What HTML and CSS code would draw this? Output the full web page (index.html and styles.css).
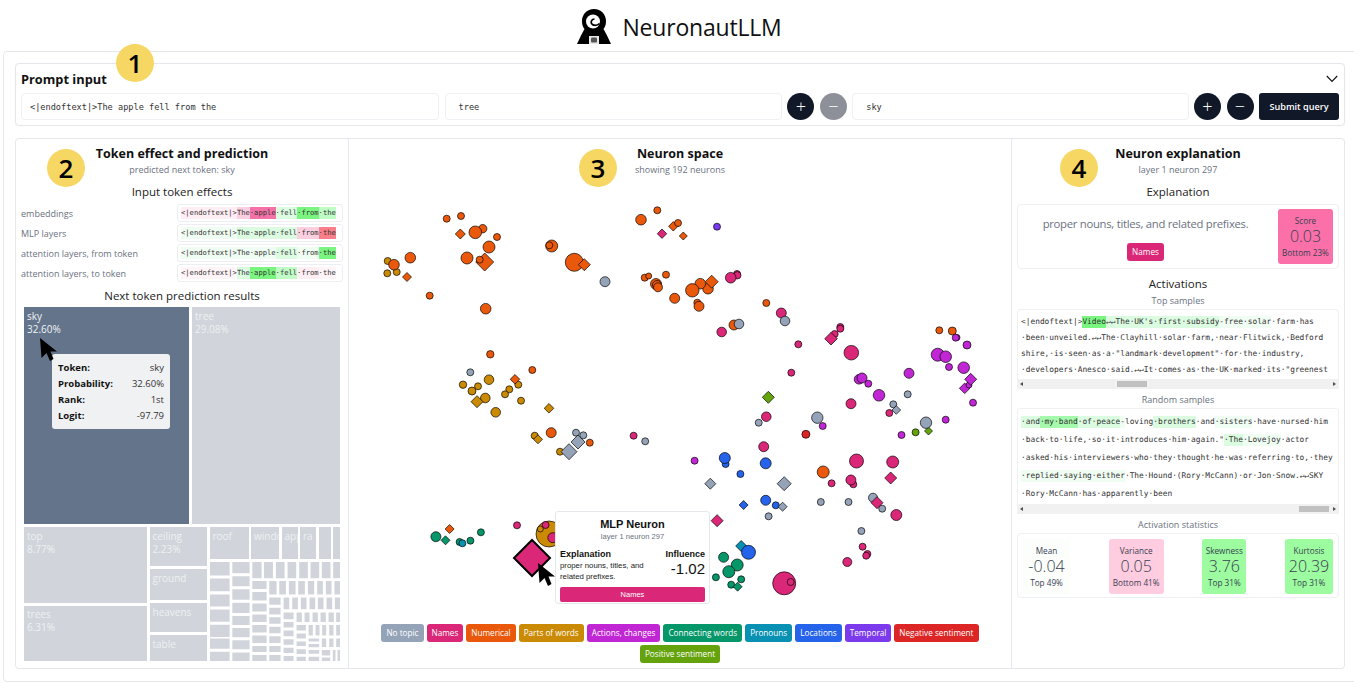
FILE: index.html
```html
<!DOCTYPE html>
<html lang="en">
<head>
<meta charset="utf-8">
<title>NeuronautLLM</title>
<link rel="stylesheet" href="styles.css">
</head>
<body>
<header class="top">
  <svg class="logo" viewBox="0 0 34 35" aria-hidden="true">
    <path fill="#000" d="M17 0C10 0 5 5.500 5 12C5 16 6 18 7.500 20L4 26.500L0 35H34L30 26.500L26.500 20C28 18 29 16 29 12C29 5.500 24 0 17 0z"/>
    <circle cx="16" cy="12.500" r="7" fill="#fff"/>
    <path fill="none" stroke="#000" stroke-width="1.700" d="M22.500 14.500c-2.500 2.500-6.500 2.500-8 0-1-2 .5-4.500 3-4.500"/>
    <rect x="12" y="27" width="10" height="8" fill="#e8e8e8"/>
    <rect x="14" y="28.500" width="6" height="5" rx="1" fill="#555"/>
  </svg>
  <h1 class="brand">NeuronautLLM</h1>
</header>

<main class="shell">
  <section class="prompt">
    <span class="badge badge-one">1</span>
    <div class="prompt-head">
      <h2 class="prompt-title">Prompt input</h2>
      <svg class="chevron" viewBox="0 0 12 8" aria-hidden="true"><path d="M.8 1l5.200 5.500L11.200 1"/></svg>
    </div>
    <div class="prompt-row">
      <div class="field field-main mono">&lt;|endoftext|&gt;The apple fell from the</div>
      <div class="field field-tree mono"><span>tree</span></div>
      <button class="round">+</button>
      <button class="round round-off">&minus;</button>
      <div class="field field-sky mono"><span>sky</span></div>
      <button class="round">+</button>
      <button class="round">&minus;</button>
      <button class="submit">Submit query</button>
    </div>
  </section>

  <section class="panels">
    <div class="col col-left">
      <span class="badge badge-two">2</span>
      <h2 class="col-title">Token effect and prediction</h2>
      <p class="col-sub">predicted next token: sky</p>
      <h3 class="sec">Input token effects</h3>
      <div class="effects">
        <div class="effect"><span class="effect-label">embeddings</span><div class="strip"><span class="p1">&lt;|endoftext|&gt;</span><span class="p2">The</span><span class="p4">·apple</span><span class="g1">·fell</span><span class="g4">·from</span><span class="g2">·the</span></div></div>
        <div class="effect"><span class="effect-label">MLP layers</span><div class="strip"><span class="g0">&lt;|endoftext|&gt;</span><span class="g1">The·apple·fell</span><span class="p2">·from</span><span class="r4">·the</span></div></div>
        <div class="effect"><span class="effect-label">attention layers, from token</span><div class="strip"><span class="g0">&lt;|endoftext|&gt;The·apple</span><span class="g1">·fell</span><span class="g0">·from</span><span class="g4">·the</span></div></div>
        <div class="effect"><span class="effect-label">attention layers, to token</span><div class="strip"><span class="p0">&lt;|endoftext|&gt;</span><span class="g1">The</span><span class="g4">·apple</span><span class="g2">·fell</span><span class="p1">·from</span><span class="p0">·the</span></div></div>
      </div>
      <h3 class="sec sec-next">Next token prediction results</h3>
      <div class="treemap">
        <div class="tm-row tm-big">
          <div class="cell cell-sky">sky<br>32.60%</div>
          <div class="cell cell-tree">tree<br>29.08%</div>
        </div>
        <div class="tm-row tm-small">
          <div class="tm-col tm-a">
            <div class="cell cell-top">top<br>8.77%</div>
            <div class="cell cell-trees">trees<br>6.31%</div>
          </div>
          <div class="tm-col tm-b">
            <div class="cell cell-ceil">ceiling<br>2.23%</div>
            <div class="cell cell-ground">ground</div>
            <div class="cell cell-heavens">heavens</div>
            <div class="cell cell-table">table</div>
          </div>
          <div class="tm-col tm-c">
            <div class="tm-strip">
              <div class="cell cell-roof">roof</div>
              <div class="cell cell-win">windo</div>
              <div class="cell cell-app">app</div>
              <div class="cell cell-ra">ra</div>
              <div class="cell cell-x1"></div>
              <div class="cell cell-x2"></div>
            </div>
            <svg class="tm-rest" viewBox="626 785 392 295" preserveAspectRatio="none" aria-hidden="true">
              <path fill="#d1d5db" d="M626 785H685V825H626zM626 834H685V872H626zM626 881H685V917H626zM626 926H685V962H626zM626 971H685V1007H626zM626 1012H685V1042H626zM626 1051H685V1080H626zM693 785H745V818H693zM693 827H745V857H693zM693 866H745V897H693zM693 906H745V936H693zM693 945H745V972H693zM693 981H745V1008H693zM693 1017H745V1044H693zM693 1053H745V1080H693zM753 785H781V833H753zM788 785H815V833H788zM824 785H850V833H824zM859 785H885V833H859zM894 785H920V833H894zM928 785H954V833H928zM962 785H988V833H962zM996 785H1018V833H996zM753 841H796V865H753zM753 874H796V899H753zM753 908H796V932H753zM753 941H796V963H753zM753 972H796V994H753zM753 1003H796V1025H753zM753 1034H796V1052H753zM753 1061H796V1080H753zM804 841H826V881H804zM834 841H854V881H834zM863 841H883V881H863zM891 841H911V881H891zM920 841H939V881H920zM948 841H965V881H948zM974 841H991V881H974zM1000 841H1018V881H1000zM804 890H838V912H804zM804 921H838V941H804zM804 949H838V968H804zM804 977H838V996H804zM804 1005H838V1025H804zM804 1034H838V1052H804zM804 1061H838V1080H804zM847 890H864V925H847zM873 890H890V925H873zM899 890H916V925H899zM925 890H942V925H925zM950 890H967V925H950zM976 890H993V925H976zM1001 890H1018V925H1001zM847 935H877V955H847zM847 963H877V979H847zM847 988H877V1005H847zM847 1014H877V1030H847zM847 1039H877V1055H847zM847 1064H877V1080H847zM886 935H902V963H886zM910 935H925V963H910zM934 935H950V963H934zM958 935H974V963H958zM982 935H998V963H982zM1005 935H1018V963H1005zM886 972H914V988H886zM886 997H914V1012H886zM886 1021H914V1034H886zM886 1044H914V1058H886zM886 1066H914V1080H886zM922 972H935V1003H922zM943 972H955V1003H943zM963 972H975V1003H963zM984 972H997V1003H984zM1005 972H1018V1003H1005zM922 1012H954V1021H922zM922 1028H954V1038H922zM922 1046H954V1057H922zM922 1066H954V1080H922zM962 1012H975V1037H962zM984 1012H997V1037H984zM1005 1012H1018V1037H1005zM962 1046H987V1062H962zM962 1068H987V1080H962zM995 1046H1003V1080H995zM1009 1046H1018V1080H1009z"/>
            </svg>
          </div>
        </div>
        <div class="tm-tip">
          <div class="tip-row"><b>Token:</b><span>sky</span></div>
          <div class="tip-row"><b>Probability:</b><span>32.60%</span></div>
          <div class="tip-row"><b>Rank:</b><span>1st</span></div>
          <div class="tip-row"><b>Logit:</b><span>-97.79</span></div>
        </div>
        <svg class="cursor cursor-tm" viewBox="0 0 17 23" aria-hidden="true"><path d="M0 0L17 13.500 10.500 13.500 13.500 21 10 23 6.500 15 1.500 20z"/></svg>
      </div>
    </div>

    <div class="col col-mid">
      <span class="badge badge-three">3</span>
      <h2 class="col-title">Neuron space</h2>
      <p class="col-sub">showing 192 neurons</p>
      <svg class="scatter" viewBox="349 180 663 440" aria-hidden="true">
        <g class="t-parts">
          <circle cx="387.700" cy="261" r="3.500"/><circle cx="387.300" cy="273.300" r="3.500"/><circle cx="396.700" cy="272" r="3.500"/>
          <circle cx="463" cy="384.700" r="3.700"/><circle cx="489" cy="379.700" r="4.800"/><circle cx="478" cy="386.300" r="3.500"/><circle cx="472" cy="391" r="4"/><circle cx="485.300" cy="398" r="4.800"/><circle cx="495.700" cy="412.300" r="4.800"/><circle cx="509.300" cy="389.300" r="3.500"/><circle cx="505" cy="394.300" r="3.500"/><circle cx="518.300" cy="384.700" r="3.500"/><circle cx="521" cy="400.700" r="3.500"/><circle cx="534.700" cy="435.700" r="3.500"/><circle cx="560" cy="451.700" r="3.500"/>
          <path d="M477 401.700m0-6l6 6-6 6-6-6z"/><path d="M549 408.300m0-4.800l4.800 4.800-4.800 4.800-4.800-4.800z"/><path d="M538 439.300m0-4.500l4.500 4.500-4.500 4.500-4.500-4.500z"/>
          <circle cx="549" cy="534" r="13"/><circle cx="540.300" cy="529" r="3"/>
        </g>
        <g class="t-num">
          <circle cx="446.700" cy="218.700" r="3.500"/><circle cx="461" cy="216" r="3.500"/><circle cx="482.700" cy="228.700" r="4.200"/><circle cx="475.300" cy="232.300" r="6.300"/><circle cx="497" cy="237" r="3.500"/><circle cx="489" cy="247" r="6"/><circle cx="467" cy="258" r="6"/>
          <path d="M460.300 234m0-5l5 5-5 5-5-5z"/><path d="M484.700 262m0-9l9 9-9 9-9-9z"/><circle cx="479.700" cy="259.700" r="3.500"/>
          <circle cx="410.300" cy="257.700" r="5.300"/><circle cx="394" cy="264.700" r="5.300"/><path d="M407 277m0-4.500l4.500 4.500-4.500 4.500-4.500-4.500z"/><circle cx="429.700" cy="295.700" r="3.500"/><circle cx="485.700" cy="308.700" r="5.300"/>
          <circle cx="551.700" cy="246" r="6"/><circle cx="549.300" cy="245.300" r="3.500"/><circle cx="574.300" cy="262.300" r="9"/><path d="M584.300 264.700m0-6l6 6-6 6-6-6z"/>
          <circle cx="641" cy="219.700" r="5.300"/><circle cx="657.300" cy="210.300" r="3.500"/><path d="M673.300 226.300m0-4.700l4.700 4.700-4.700 4.700-4.700-4.700z"/><circle cx="678" cy="223" r="3.500"/><path d="M683.300 236m0-4l4 4-4 4-4-4z"/>
          <circle cx="644.700" cy="277.700" r="3.500"/><circle cx="648.700" cy="276" r="3"/><circle cx="666" cy="274.700" r="3.500"/><circle cx="656" cy="284" r="5.500"/><circle cx="657" cy="285" r="4.500"/><circle cx="658" cy="287.300" r="4.500"/><circle cx="674.700" cy="298.300" r="5"/>
          <circle cx="708" cy="288.700" r="5.300"/><path d="M711.700 281.700m0-6.500l6.500 6.500-6.500 6.500-6.500-6.500z"/><circle cx="700.300" cy="283.700" r="5.300"/><circle cx="692.300" cy="290.300" r="6.700"/><circle cx="697.300" cy="302.700" r="3.500"/><circle cx="699" cy="306.300" r="5"/>
          <circle cx="766.300" cy="303" r="3.500"/><circle cx="734" cy="325" r="5"/><circle cx="939.300" cy="330.300" r="3.500"/><circle cx="952.300" cy="331" r="4"/>
          <circle cx="490.300" cy="354.300" r="3.700"/><circle cx="532.300" cy="370" r="3.500"/><path d="M515 379.300m0-4.800l4.800 4.800-4.800 4.800-4.800-4.800z"/><circle cx="551.200" cy="432.700" r="5"/><circle cx="589.800" cy="442.700" r="3.500"/><circle cx="823.200" cy="472" r="6"/><path d="M449.600 529m0-4.500l4.500 4.500-4.500 4.500-4.500-4.500z"/>
        </g>
        <g class="t-act">
          <circle cx="859" cy="379.300" r="4.800"/><circle cx="862" cy="378" r="5"/><circle cx="868.300" cy="383.700" r="3.500"/><circle cx="909" cy="373.300" r="5"/><circle cx="879" cy="395.300" r="5.800"/>
          <circle cx="822.700" cy="426" r="3.500"/><circle cx="945.700" cy="419.700" r="3.500"/><circle cx="957" cy="337.500" r="3"/><circle cx="955.700" cy="337.700" r="3.500"/><circle cx="967" cy="345" r="4"/><circle cx="937.700" cy="354.700" r="6.500"/><circle cx="945.700" cy="356.700" r="5.800"/><circle cx="949" cy="367" r="3.500"/><circle cx="963.700" cy="367.700" r="5.800"/>
          <path d="M964.700 388.300m0-5.300l5.300 5.300-5.300 5.300-5.300-5.300z"/><circle cx="969" cy="385" r="3"/><path d="M970.700 379.300m0-6l6 6-6 6-6-6z"/><circle cx="973" cy="402.700" r="3.500"/><circle cx="901.500" cy="435" r="3.500"/><circle cx="694.600" cy="460.700" r="3.500"/>
        </g>
        <g class="t-names">
          <path d="M662 233.700m0-4.700l4.700 4.700-4.700 4.700-4.700-4.700z"/><circle cx="737" cy="274" r="3.500"/><circle cx="737.300" cy="275.300" r="3.700"/><circle cx="730.700" cy="277.700" r="5.300"/><circle cx="781.300" cy="313" r="5"/><circle cx="721.700" cy="332" r="4.800"/><circle cx="798.300" cy="344.300" r="3.500"/>
          <circle cx="840.300" cy="327" r="3.500"/><circle cx="840.300" cy="328.700" r="3.500"/><circle cx="834.700" cy="334" r="3.500"/><path d="M831 338.700m0-6.300l6.300 6.300-6.300 6.300-6.300-6.300z"/><circle cx="851.300" cy="352.700" r="7.300"/><circle cx="791.300" cy="372.700" r="3.500"/><circle cx="766.300" cy="416.700" r="4.800"/><circle cx="851" cy="403.700" r="5"/><circle cx="889.300" cy="413" r="3.500"/>
          <circle cx="633.600" cy="435.700" r="3.500"/><circle cx="763.700" cy="446.700" r="5"/><circle cx="856.500" cy="461" r="7"/><circle cx="892.700" cy="462" r="6"/><circle cx="831.600" cy="483.300" r="3.500"/><circle cx="853.300" cy="484.300" r="3.500"/><circle cx="850.900" cy="480" r="5"/><path d="M890.700 478m0-6l6 6-6 6-6-6z"/><circle cx="896.300" cy="515" r="5.500"/><path d="M717.100 520.700m0-6l6 6-6 6-6-6z"/>
          <circle cx="862.600" cy="546.700" r="3.500"/><circle cx="867.400" cy="554" r="3.500"/><circle cx="866.200" cy="555.700" r="3.500"/><circle cx="847.300" cy="562" r="4.500"/><circle cx="784.200" cy="583.300" r="11.500"/><circle cx="790.700" cy="582" r="3.500"/><circle cx="517" cy="525.300" r="3.500"/><circle cx="545.600" cy="525" r="3.500"/><circle cx="552.800" cy="537.700" r="5"/>
        </g>
        <g class="t-conn">
          <circle cx="723.600" cy="557.300" r="5"/><circle cx="737.200" cy="565" r="6"/><circle cx="728.800" cy="571.700" r="6"/><circle cx="715.900" cy="577.300" r="3.500"/><circle cx="741.200" cy="579.300" r="3.500"/><circle cx="731.200" cy="584.700" r="3.500"/><path d="M737.600 586.700m0-4.500l4.500 4.500-4.500 4.500-4.500-4.500z"/>
          <circle cx="435.900" cy="536.700" r="5"/><path d="M445.500 540.300m0-4.500l4.500 4.500-4.500 4.500-4.500-4.500z"/><circle cx="459.600" cy="542" r="3.500"/><circle cx="470.400" cy="540.700" r="3.500"/><circle cx="480.900" cy="532.300" r="3.500"/>
        </g>
        <g class="t-pron"><circle cx="462.400" cy="543.300" r="3.500"/><path d="M741.200 546m0-5.500l5.500 5.500-5.500 5.500-5.500-5.500z"/></g>
        <g class="t-loc">
          <circle cx="725.600" cy="464" r="3.500"/><circle cx="724.800" cy="458" r="5.500"/><circle cx="765.700" cy="463.300" r="5.500"/><circle cx="740.400" cy="474" r="3.500"/><path d="M743.600 505m0-4.500l4.500 4.500-4.500 4.500-4.500-4.500z"/><circle cx="765.700" cy="500.300" r="5"/><circle cx="775.800" cy="505.300" r="3.500"/><circle cx="748.500" cy="552.300" r="7"/>
        </g>
        <g class="t-temp"><circle cx="717" cy="226.700" r="3.500"/></g>
        <g class="t-neg"><circle cx="805.900" cy="434.300" r="4"/></g>
        <g class="t-pos"><path d="M768.300 397.300m0-6l6 6-6 6-6-6z"/><circle cx="915.600" cy="432.300" r="3.500"/><path d="M928.500 431m0-4l4 4-4 4-4-4z"/></g>
        <g class="t-none">
          <circle cx="605" cy="281.700" r="5"/><circle cx="739" cy="324" r="4.800"/><circle cx="785" cy="321" r="4.800"/><circle cx="758.700" cy="422.700" r="3.500"/><circle cx="817.300" cy="417.700" r="5.700"/><circle cx="907.700" cy="394.300" r="3.500"/><circle cx="893.300" cy="404.300" r="3.500"/><path d="M896.300 410m0-4.300l4.300 4.300-4.300 4.300-4.300-4.300z"/><circle cx="926" cy="422.700" r="5.700"/>
          <circle cx="470.300" cy="372.300" r="3.500"/><circle cx="576" cy="432.700" r="3.500"/><circle cx="583.300" cy="435.300" r="3.500"/><path d="M578 442m0-7l7 7-7 7-7-7z"/><path d="M569 451.700m0-8l8 8-8 8-8-8z"/><circle cx="645.200" cy="441.300" r="3.500"/>
          <path d="M710.300 483.700m0-5.500l5.500 5.500-5.500 5.500-5.500-5.500z"/><path d="M784.200 483.700m0-7l7 7-7 7-7-7z"/><path d="M782.600 506.700m0-4.500l4.500 4.500-4.500 4.500-4.500-4.500z"/><circle cx="820.800" cy="502" r="3.500"/><circle cx="848.500" cy="502" r="3.500"/><circle cx="873" cy="497.700" r="4.500"/><circle cx="882.200" cy="508.700" r="3.500"/><circle cx="768.600" cy="516.300" r="3.500"/><circle cx="861.400" cy="531" r="3.500"/>
        </g>
        <g class="t-names"><path d="M877 502.700m0-6l6 6-6 6-6-6z"/></g>
        <path class="selected" d="M532 558m0-18l18 18-18 18-18-18z"/>
      </svg>
      <div class="neuron-tip">
        <h4 class="nt-title">MLP Neuron</h4>
        <p class="nt-sub">layer 1 neuron 297</p>
        <div class="nt-body">
          <div class="nt-exp"><b>Explanation</b><p>proper nouns, titles, and related prefixes.</p></div>
          <div class="nt-inf"><b>Influence</b><span class="nt-val">-1.02</span></div>
        </div>
        <div class="nt-chip">Names</div>
      </div>
      <svg class="cursor cursor-sc" viewBox="0 0 17 23" aria-hidden="true"><path d="M0 0L17 13.500 10.500 13.500 13.500 21 10 23 6.500 15 1.500 20z"/></svg>
      <div class="chips">
        <span class="chip c-none">No topic</span>
        <span class="chip c-names">Names</span>
        <span class="chip c-num">Numerical</span>
        <span class="chip c-parts">Parts of words</span>
        <span class="chip c-act">Actions, changes</span>
        <span class="chip c-conn">Connecting words</span>
        <span class="chip c-pron">Pronouns</span>
        <span class="chip c-loc">Locations</span>
        <span class="chip c-temp">Temporal</span>
        <span class="chip c-neg">Negative sentiment</span>
        <span class="chip c-pos">Positive sentiment</span>
      </div>
    </div>

    <div class="col col-right">
      <span class="badge badge-four">4</span>
      <h2 class="col-title">Neuron explanation</h2>
      <p class="col-sub">layer 1 neuron 297</p>
      <h3 class="sec">Explanation</h3>
      <div class="card explain">
        <div class="explain-text">
          <p class="explain-line">proper nouns, titles, and related prefixes.</p>
          <span class="chip c-names">Names</span>
        </div>
        <div class="stat stat-score"><span class="stat-k">Score</span><span class="stat-v">0.03</span><span class="stat-k">Bottom 23%</span></div>
      </div>
      <h3 class="sec sec-act">Activations</h3>
      <p class="col-sub sub-top">Top samples</p>
      <div class="sample sample-top mono">
        <div><span>&lt;|endoftext|&gt;</span><span class="g4">Video</span><span class="g1">↵↵The·UK's·first·subsidy</span><span class="g0">-free·solar</span>·farm·has</div>
        <div>·been·unveiled.↵↵The·Clayhill·solar·farm,·near·Flitwick,·Bedford</div>
        <div>shire,·is·seen·as·a·"landmark·development"·for·the·industry,</div>
        <div>·developers·Anesco·said.↵↵It·comes·as·the·UK·marked·its·"greenest</div>
      </div>
      <div class="scrollbar"><i class="arrow-l"></i><b class="thumb thumb-top"></b><i class="arrow-r"></i></div>
      <p class="col-sub sub-random">Random samples</p>
      <div class="sample sample-rand mono">
        <div><span class="g1">·and</span><span class="g3">·my·band</span><span class="g1">·of·peace</span><span class="g0">-</span>loving<span class="g1">·brothers</span>·and<span class="g0">·sisters</span>·have·nursed·him</div>
        <div>·back·to·life,·so·it·introduces·him·again."<span class="g1">·The</span><span class="g0">·Lovejoy</span>·actor</div>
        <div>·asked·his·interviewers·who·they·thought·he·was·referring·to,·they</div>
        <div><span class="g0">·replied·saying·either</span>·The·Hound·(Rory·McCann)·or·Jon·Snow.↵↵SKY</div>
        <div>·Rory·McCann·has·apparently·been</div>
      </div>
      <div class="scrollbar"><i class="arrow-l"></i><b class="thumb thumb-rand"></b><i class="arrow-r"></i></div>
      <p class="col-sub sub-stats">Activation statistics</p>
      <div class="card stats">
        <div class="stat stat-mean"><span class="stat-k">Mean</span><span class="stat-v">-0.04</span><span class="stat-k">Top 49%</span></div>
        <div class="stat stat-var"><span class="stat-k">Variance</span><span class="stat-v">0.05</span><span class="stat-k">Bottom 41%</span></div>
        <div class="stat stat-skew"><span class="stat-k">Skewness</span><span class="stat-v">3.76</span><span class="stat-k">Top 31%</span></div>
        <div class="stat stat-kurt"><span class="stat-k">Kurtosis</span><span class="stat-v">20.39</span><span class="stat-k">Top 31%</span></div>
      </div>
    </div>
  </section>
</main>
</body>
</html>
```

FILE: styles.css
```css
* { box-sizing: border-box; }
html, body { margin: 0; height: 100%; overflow: hidden; background: #fff; }
body { font-family: "Open Sans", "Noto Sans", sans-serif; color: #111827; }
h1, h2, h3, h4, p { margin: 0; font-weight: inherit; }
.mono { font-family: "DejaVu Sans Mono", monospace; }

.top { height: 51px; display: flex; align-items: center; justify-content: center; gap: 11px; padding-left: 5px; padding-top: 2px; }
.logo { width: 34px; height: 35px; }
.brand { font-size: 23px; font-weight: 400; letter-spacing: -.2px; color: #111; }

.shell { margin: 0 -6px 0 3px; height: 631px; border: 1px solid #e5e7eb; border-radius: 4px; padding: 11px 14px 0 11px; }

.prompt { position: relative; height: 63px; border: 1px solid #e5e7eb; border-radius: 4px; box-shadow: 0 0 1px #e5e7eb; padding: 0 5px; }
.prompt-head { height: 29px; display: flex; align-items: center; justify-content: space-between; }
.prompt-title { font-size: 12.800px; font-weight: 700; color: #111; }
.chevron { width: 12px; height: 8px; margin-right: 1px; fill: none; stroke: #111; stroke-width: 1.100; }
.prompt-row { display: flex; gap: 5.500px; align-items: center; height: 27px; }
.field { height: 27px; border: 1px solid #eef0f3; border-radius: 4px; font-size: 8.600px; color: #333; display: flex; align-items: center; padding-left: 8px; }
.field-main { width: 419px; }
.field-tree { width: 338px; padding-left: 13px; }
.field-sky { width: 337px; padding-left: 13px; }
.round { width: 27px; height: 27px; border: 0; border-radius: 50%; background: #111827; color: #fff; font: 300 18px/27px "Open Sans", sans-serif; padding: 0; flex: none; }
.round-off { background: #8d9098; }
.submit { width: 80px; height: 27px; border: 0; border-radius: 3px; background: #111827; color: #fff; font: 600 9.100px "Open Sans", sans-serif; padding: 0; flex: none; }

.badge { position: absolute; width: 38px; height: 38px; border-radius: 50%; background: #f7d763; color: #000; font-size: 26px; font-weight: 600; line-height: 38px; text-align: center; z-index: 3; }
.badge-one { left: 100px; top: -20px; }
.badge-two { left: 31px; top: 10px; }
.badge-three { left: 230px; top: 10px; }
.badge-four { left: 48px; top: 10px; }

.panels { margin-top: 12px; height: 531px; border: 1px solid #e5e7eb; border-radius: 4px; display: grid; grid-template-columns: 332px 664px 1fr; }
.col { position: relative; padding-top: 6px; text-align: center; min-width: 0; }
.col-mid { border-left: 1px solid #e5e7eb; border-right: 1px solid #e5e7eb; }
.col-title { font-size: 12.500px; line-height: 18px; font-weight: 700; color: #111; }
.col-sub { font-size: 9px; line-height: 14px; color: #6b7280; }
.sec { font-size: 11.500px; line-height: 18px; margin-top: 6px; color: #222; }

.effects { display: flex; flex-direction: column; gap: 2px; margin: 3px 5px 0; }
.effect { display: flex; justify-content: space-between; align-items: center; height: 18px; }
.effect-label { font-size: 9px; color: #6b7280; }
.strip { width: 166px; height: 18px; border: 1px solid #eceef1; border-radius: 3px; font: 7.150px/16px "DejaVu Sans Mono", monospace; color: #333; padding-left: 3px; text-align: left; white-space: nowrap; overflow: hidden; }
.strip span { display: inline-block; line-height: 12px; }
.p0 { background: #fff5f8; }
.p1 { background: #ffeef4; }
.p2 { background: #fbcfe0; }
.p4 { background: #f472a8; }
.r4 { background: #fb7f8a; }
.g0 { background: #f0fdf2; }
.g1 { background: #dcfce2; }
.g2 { background: #c0fcc5; }
.g3 { background: #a5f9ac; }
.g4 { background: #7af57f; }

.sec-next { margin-top: 5px; }
.treemap { position: relative; margin: 2px 0 0 8px; width: 316px; height: 354px; display: flex; flex-direction: column; gap: 3px; text-align: left; }
.tm-row { display: flex; gap: 3px; }
.tm-big { height: 217px; }
.tm-small { flex: 1; min-height: 0; }
.tm-col { display: flex; flex-direction: column; gap: 3px; }
.tm-a { width: 122.500px; }
.tm-b { width: 57px; }
.tm-c { flex: 1; min-width: 0; gap: 2.500px; }
.cell { background: #d1d5db; color: #eef0f2; font-size: 10px; line-height: 13px; padding: 3px; overflow: hidden; white-space: nowrap; }
.cell-sky { width: 165px; background: #64748b; color: #f1f3f5; }
.cell-tree { flex: 1; }
.cell-top { height: 76px; }
.cell-trees { flex: 1; padding-top: 2px; }
.cell-ceil { height: 39px; }
.cell-ground { height: 31px; }
.cell-heavens { height: 29px; }
.cell-table { flex: 1; }
.tm-strip { display: flex; gap: 2.500px; height: 32px; flex: none; }
.cell-roof { width: 39px; }
.cell-win { width: 28px; }
.cell-app { width: 16px; }
.cell-ra { width: 16px; }
.cell-x1 { width: 12px; padding: 0; }
.cell-x2 { flex: 1; padding: 0; }
.tm-rest { display: block; width: 100%; flex: 1; min-height: 0; }
.tm-tip { position: absolute; left: 28px; top: 47px; width: 118px; height: 75px; background: #f0f1f3; border-radius: 3px; padding: 6px 6px 0; font-size: 9.500px; line-height: 16px; color: #333; }
.tip-row { display: flex; justify-content: space-between; }
.tip-row b { color: #111; font-weight: 700; }
.cursor { position: absolute; fill: #000; z-index: 2; }
.cursor-tm { left: 16px; top: 31px; width: 17px; height: 23px; }
.cursor-sc { left: 189px; top: 424px; width: 17px; height: 23px; }

.scatter { display: block; width: 663px; height: 440px; margin-top: 3px; }
.scatter circle, .scatter path { stroke: #000; stroke-opacity: .75; stroke-width: .9; }
.t-none { fill: #94a3b8; }
.t-names { fill: #db2777; }
.t-num { fill: #ea580c; }
.t-parts { fill: #ca8a04; }
.t-act { fill: #c026d3; }
.t-conn { fill: #059669; }
.t-pron { fill: #0891b2; }
.t-loc { fill: #2563eb; }
.t-temp { fill: #7c3aed; }
.t-neg { fill: #dc2626; }
.t-pos { fill: #65a30d; }
.scatter .selected { fill: #db2777; stroke: #000; stroke-opacity: 1; stroke-width: 2; }

.chips { display: flex; flex-wrap: wrap; justify-content: center; gap: 3px; margin-top: 4px; padding: 0 30px; }
.chip { display: inline-block; height: 18px; padding: 0 5px; border-radius: 3px; color: #fff; font-size: 8.200px; line-height: 18px; white-space: nowrap; }
.c-none { background: #94a3b8; }
.c-names { background: #db2777; }
.c-num { background: #ea580c; }
.c-parts { background: #ca8a04; }
.c-act { background: #c026d3; }
.c-conn { background: #059669; }
.c-pron { background: #0891b2; }
.c-loc { background: #2563eb; }
.c-temp { background: #7c3aed; }
.c-neg { background: #dc2626; }
.c-pos { background: #65a30d; }

.neuron-tip { position: absolute; left: 206px; top: 372px; width: 155px; height: 93px; background: #fff; border: 1px solid #e5e7eb; border-radius: 3px; padding: 5px 4px 0; font-family: "Liberation Sans", Arial, sans-serif; text-align: left; z-index: 1; }
.nt-title { font-size: 11px; line-height: 14px; font-weight: 700; text-align: center; color: #111; }
.nt-sub { font-size: 7.600px; line-height: 12px; text-align: center; color: #6b7280; }
.nt-body { display: flex; justify-content: space-between; margin-top: 5px; height: 36px; }
.nt-exp { width: 92px; font-size: 7.800px; line-height: 11px; color: #222; }
.nt-exp b, .nt-inf b { display: block; font-size: 9px; line-height: 12px; color: #111; }
.nt-exp p { margin-top: 0; }
.nt-inf { text-align: right; }
.nt-val { display: block; font-size: 15px; line-height: 18px; color: #111; }
.nt-chip { margin-top: 3px; height: 15px; line-height: 15px; background: #db2777; color: #fff; font-size: 7.500px; text-align: center; border-radius: 2px; }

.card { margin: 0 5px; border: 1px solid #eef0f3; border-radius: 4px; }
.explain { margin-top: 3px; height: 65px; display: flex; padding: 4px 5px; }
.explain-text { flex: 1; text-align: center; padding: 6px 10px 0 0; }
.explain-line { font-size: 11.300px; line-height: 18px; color: #6b7280; margin-bottom: 5px; letter-spacing: -.28px; white-space: nowrap; }
.stat { height: 55px; border-radius: 3px; display: flex; flex-direction: column; align-items: center; justify-content: flex-start; padding: 6px 5px 0; color: #374151; }
.stat-k { font-size: 8.200px; line-height: 11px; white-space: nowrap; }
.stat-v { font-size: 16px; line-height: 21px; font-weight: 300; white-space: nowrap; }
.stat-score { width: 55px; background: #fb70a8; padding-left: 0; padding-right: 0; }
.stat-mean { width: 47px; background: #fcfefc; }
.stat-var { width: 55px; background: #ffcce0; padding-left: 0; padding-right: 0; }
.stat-skew { width: 44px; background: #9cfc9f; padding-left: 0; padding-right: 0; }
.stat-kurt { width: 48px; background: #9cfc9f; padding-left: 0; padding-right: 0; }

.sec-act { margin-top: 6px; }
.sub-top { margin-top: 1px; }
.sample { margin: 1px 5px 0; border: 1px solid #f0f1f3; border-bottom: 0; border-radius: 4px 4px 0 0; font-size: 7.850px; color: #333; text-align: left; white-space: nowrap; overflow: hidden; padding-left: 3px; }
.sample-top { height: 70px; line-height: 16px; padding-top: 4px; }
.sample-rand { height: 96px; line-height: 18px; padding-top: 4px; }
.sample span { display: inline-block; line-height: 12px; }
.scrollbar { position: relative; margin: 0 5px; height: 10px; background: #f1f1f1; }
.thumb { position: absolute; top: 2px; height: 6px; width: 30px; background: #c1c1c1; }
.thumb-top { left: 100px; }
.thumb-rand { left: 282px; }
.arrow-l, .arrow-r { position: absolute; top: 3px; width: 0; height: 0; border-top: 2px solid transparent; border-bottom: 2px solid transparent; }
.arrow-l { left: 3px; border-right: 3px solid #505050; }
.arrow-r { right: 3px; border-left: 3px solid #505050; }
.sub-random { margin-top: 4px; }
.sub-stats { margin-top: 4px; }
.stats { margin-top: 1px; height: 65px; display: flex; justify-content: space-between; padding: 5px; }
```
